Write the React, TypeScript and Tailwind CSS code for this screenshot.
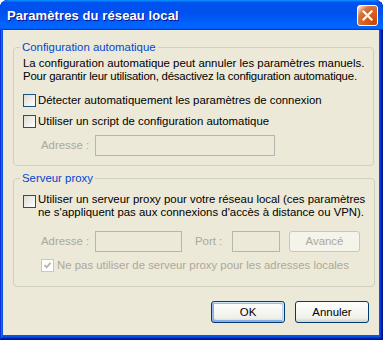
import clsx from "clsx";
import type { ReactNode } from "react";

const ui = "font-['Liberation_Sans',Arial,sans-serif] text-[11.4px] leading-[13px] whitespace-nowrap";

function Box({ checked, disabled }: { checked?: boolean; disabled?: boolean }) {
	return (
		<span
			className={clsx(
				"flex h-[13px] w-[13px] shrink-0 items-center justify-center border",
				disabled
					? "border-[#cac8bb] bg-white"
					: "border-[#1c5180] bg-[linear-gradient(135deg,#dcdcd7,#ffffff)]"
			)}
		>
			{checked && (
				<svg width="9" height="9" viewBox="0 0 9 9">
					<path
						d="M1.5 4 L3.5 6.3 L7.6 1.8"
						fill="none"
						stroke={disabled ? "#b8b5a6" : "#21a121"}
						strokeWidth="1.8"
					/>
				</svg>
			)}
		</span>
	);
}

function Field({ w }: { w: string }) {
	return <span className={clsx("h-[21px] border border-[#b5b6ae] bg-[#ece9d8]", w)} />;
}

function Btn({
	children,
	primary,
	disabled,
	className,
}: {
	children: ReactNode;
	primary?: boolean;
	disabled?: boolean;
	className?: string;
}) {
	return (
		<button
			className={clsx(
				"flex items-center justify-center rounded-[3px] border",
				disabled
					? "border-[#c9c7ba] bg-[#f5f4ea] text-[#aca899]"
					: "border-[#003c74] bg-[linear-gradient(180deg,#ffffff,#f0f0ea_80%,#d6d0c5)] text-black",
				primary &&
					"shadow-[inset_-1px_1px_#cee7ff,inset_1px_2px_#98b8ea,inset_-2px_2px_#bcd4f6,inset_1px_-1px_#89ade4,inset_2px_-2px_#89ade4]",
				className
			)}
		>
			{children}
		</button>
	);
}

function Group({ title, children, className }: { title: string; children: ReactNode; className?: string }) {
	return (
		<fieldset className={clsx("mx-[10px] rounded-[4px] border border-[#d0d0bf] px-[9px]", className)}>
			<legend className="ml-[-3px] px-[2px] text-[#0046d5]">{title}</legend>
			{children}
		</fieldset>
	);
}

export default function App() {
	return (
		<div className="min-h-screen bg-white">
			<div
				className={clsx(
					"flex h-[340px] w-[383px] flex-col overflow-hidden rounded-t-[8px] bg-[#0055ea]",
					"shadow-[inset_-1px_-1px_#00138c,inset_1px_1px_#0831d9,inset_-2px_-2px_#001ea0,inset_2px_2px_#166aee,inset_-3px_-3px_#003bda,inset_3px_3px_#0855dd]",
					ui
				)}
			>
				<div className="flex h-[30px] shrink-0 items-center justify-between rounded-t-[8px] bg-[linear-gradient(180deg,#0997ff,#0053ee_8%,#0050ee_40%,#0066ff_88%,#0066ff_93%,#005bff_95%,#003dd7_96%,#003dd7)] pl-[7px] pr-[5px]">
					<span className="font-['Liberation_Sans',Arial,sans-serif] text-[13px] font-bold tracking-[0.1px] text-white [text-shadow:1px_1px_#0f1089]">
						Paramètres du réseau local
					</span>
					<span className="flex h-[21px] w-[21px] items-center justify-center rounded-[3px] border border-white bg-[radial-gradient(circle_at_90%_90%,#cc4600_0%,#dc6527_55%,#cd7546_70%,#ffccb2_90%,#ffffff_100%)]">
						<svg width="11" height="11" viewBox="0 0 11 11">
							<path d="M1.5 1.5 L9.5 9.5 M9.5 1.5 L1.5 9.5" stroke="white" strokeWidth="2.2" strokeLinecap="square" />
						</svg>
					</span>
				</div>

				<div className="mb-[5px] ml-[3px] mr-[4px] flex flex-1 flex-col bg-[#ece9d8] pt-[11px] text-black">
					<Group title="Configuration automatique" className="pb-[9px]">
						<p className="mt-[3px]">
							La configuration automatique peut annuler les paramètres manuels.
							<br />
							<span className="tracking-[-0.2px]">
								Pour garantir leur utilisation, désactivez la configuration automatique.
							</span>
						</p>
						<label className="mt-[11px] flex items-center gap-[2px]">
							<Box />
							<span>Détecter automatiquement les paramètres de connexion</span>
						</label>
						<label className="mt-[8px] flex items-center gap-[2px]">
							<Box />
							<span>Utiliser un script de configuration automatique</span>
						</label>
						<div className="mt-[7px] flex items-center pl-[18px] text-[#aca899]">
							<span className="w-[54px]">Adresse :</span>
							<Field w="w-[180px]" />
						</div>
					</Group>

					<Group title="Serveur proxy" className="mt-[6px] pb-[14px]">
						<label className="mt-[8px] flex items-start gap-[2px]">
							<span className="mt-[2px]">
								<Box />
							</span>
							<span>
								Utiliser un serveur proxy pour votre réseau local (ces paramètres
								<br />
								ne s'appliquent pas aux connexions d'accès à distance ou VPN).
							</span>
						</label>
						<div className="mt-[12px] flex items-center pl-[18px] text-[#aca899]">
							<span className="w-[54px]">Adresse :</span>
							<Field w="w-[87px]" />
							<span className="ml-[13px] w-[37px]">Port :</span>
							<Field w="w-[48px]" />
							<Btn disabled className="ml-[9px] h-[21px] w-[71px]">
								Avancé
							</Btn>
						</div>
						<label className="mt-[7px] flex items-center gap-[3px] pl-[18px] text-[#aca899]">
							<Box checked disabled />
							<span>Ne pas utiliser de serveur proxy pour les adresses locales</span>
						</label>
					</Group>

					<div className="mr-[10px] mt-[14px] flex justify-end gap-[10px]">
						<Btn primary className="h-[22px] w-[74px]">
							OK
						</Btn>
						<Btn className="h-[22px] w-[74px]">Annuler</Btn>
					</div>
				</div>
			</div>
		</div>
	);
}
